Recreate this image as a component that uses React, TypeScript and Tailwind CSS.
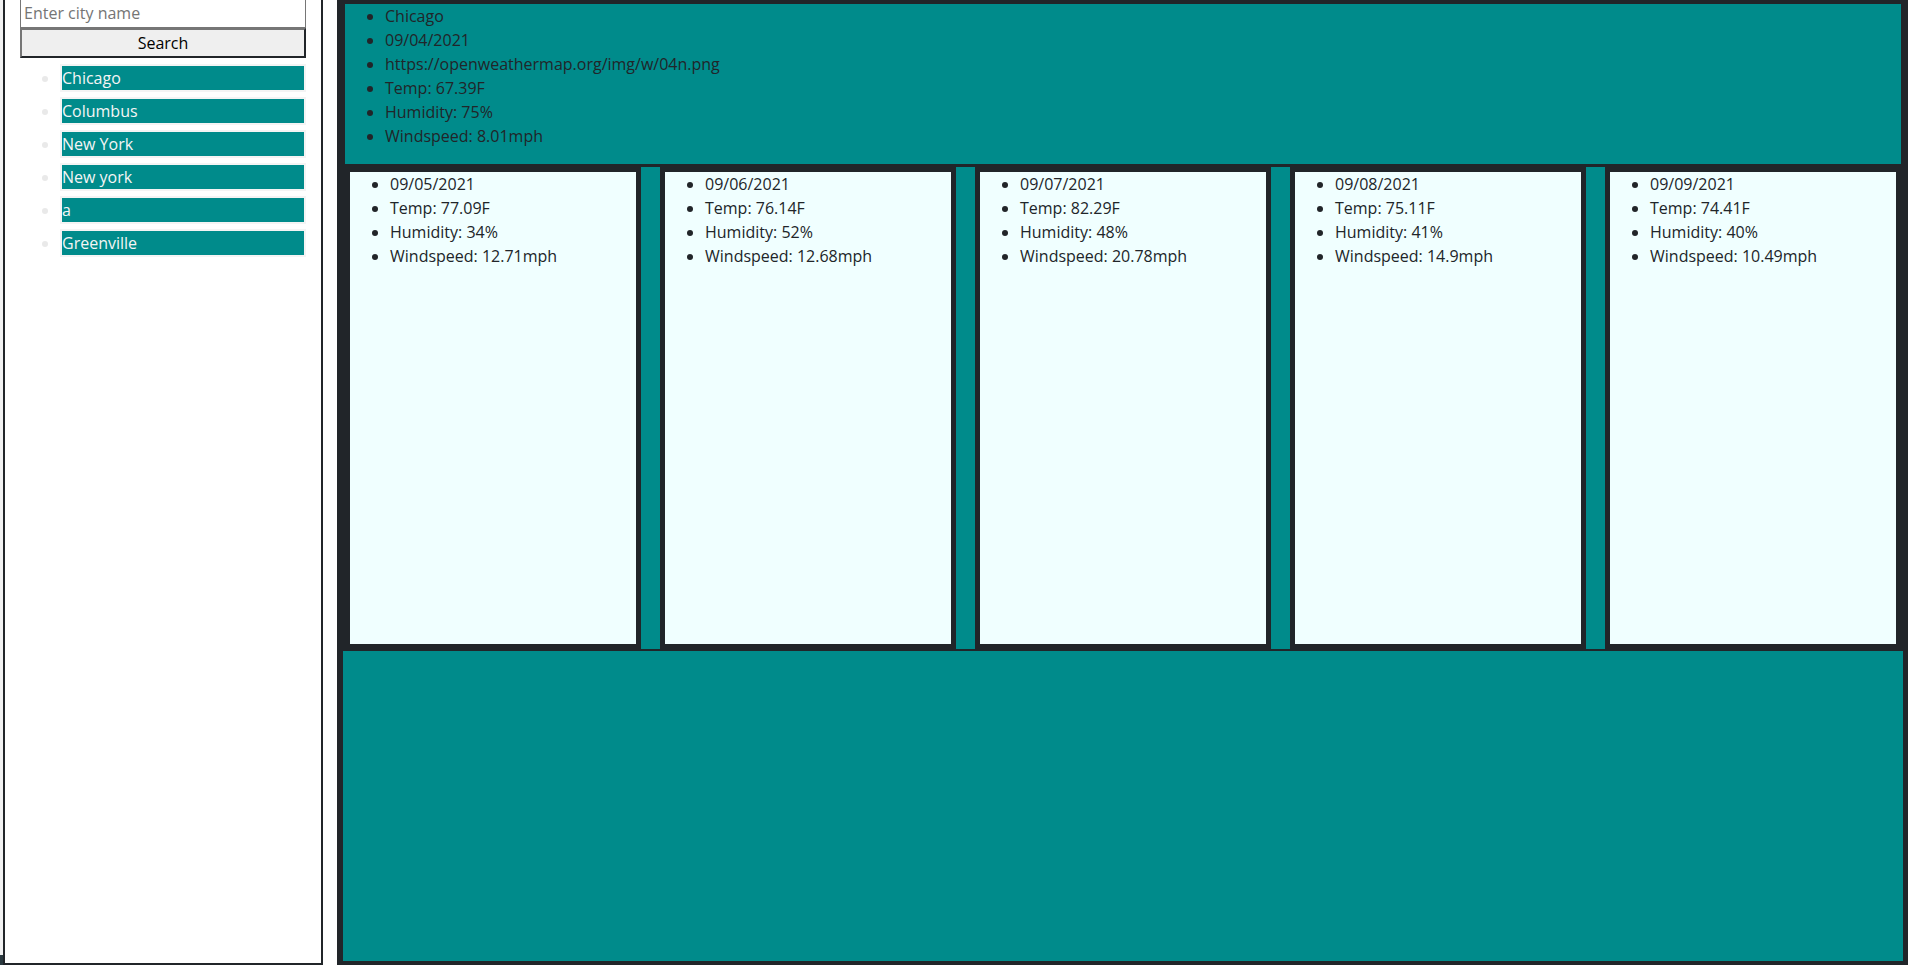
import React from 'react';

const cities = ['Chicago', 'Columbus', 'New York', 'New york', 'a', 'Greenville'];

const current = [
  'Chicago',
  '09/04/2021',
  'https://openweathermap.org/img/w/04n.png',
  'Temp: 67.39F',
  'Humidity: 75%',
  'Windspeed: 8.01mph',
];

const forecast = [
  { date: '09/05/2021', temp: '77.09', humidity: '34', wind: '12.71' },
  { date: '09/06/2021', temp: '76.14', humidity: '52', wind: '12.68' },
  { date: '09/07/2021', temp: '82.29', humidity: '48', wind: '20.78' },
  { date: '09/08/2021', temp: '75.11', humidity: '41', wind: '14.9' },
  { date: '09/09/2021', temp: '74.41', humidity: '40', wind: '10.49' },
];

const ForecastCard = ({ day }: { day: (typeof forecast)[number] }) => (
  <div className="h-full w-[296px] shrink-0 border-[5px] border-[#212529]">
    <div className="h-full bg-[#f0ffff]">
      <ul className="m-0 list-disc pl-10 leading-6 text-[#212529]">
        <li>{day.date}</li>
        <li>Temp: {day.temp}F</li>
        <li>Humidity: {day.humidity}%</li>
        <li>Windspeed: {day.wind}mph</li>
      </ul>
    </div>
  </div>
);

export default function App() {
  return (
    <div className="flex h-[965px] w-[1916px] overflow-hidden bg-white font-['Open_Sans',sans-serif] text-base">
      {/* strip at the far left */}
      <div className="flex h-full w-[3px] shrink-0 flex-col bg-[#f1f1f1]">
        <div className="flex-1" />
        <div className="h-[10px] bg-[#2b3a40]" />
      </div>

      {/* search sidebar */}
      <aside className="mr-[14px] h-full w-[320px] shrink-0 border-x-2 border-b-2 border-[#212529] bg-white px-[15px]">
        <input
          type="text"
          placeholder="Enter city name"
          className="-mt-[2px] block h-[30px] w-full border border-[#767676] bg-white px-[3px] text-base leading-6 text-black outline-none placeholder:text-[#757575]"
        />
        <button className="block h-[30px] w-full border-2 border-b-[#212529] border-l-[#767676] border-r-[#212529] border-t-[#767676] bg-[#efefef] text-base leading-6 text-black">
          Search
        </button>
        <ul className="m-0 mt-[6px] list-disc pl-10 text-[#e9e9e9]">
          {cities.map((city) => (
            <li key={city} className="mb-[5px]">
              <div className="h-[28px] border-2 border-[#f4f4f4] bg-[#008b8b] font-medium leading-6 text-[#f5f5f5]">
                {city}
              </div>
            </li>
          ))}
        </ul>
      </aside>

      {/* weather area */}
      <main className="h-full w-[1571px] shrink-0 bg-[#212529] pl-[8px] pr-[7px] pt-[4px]">
        <div className="h-[160px] bg-[#008b8b]">
          <ul className="m-0 list-disc pl-10 leading-6 text-[#212529]">
            {current.map((line) => (
              <li key={line}>{line}</li>
            ))}
          </ul>
        </div>

        <div className="flex h-[487px] pb-[2px] pt-[3px]">
          {forecast.map((day, i) => (
            <React.Fragment key={day.date}>
              {i > 0 && <div className="h-full w-[19px] shrink-0 bg-[#008b8b]" />}
              <ForecastCard day={day} />
            </React.Fragment>
          ))}
        </div>

        <div className="-mx-[2px] h-[310px] bg-[#008b8b]" />
      </main>
    </div>
  );
}
